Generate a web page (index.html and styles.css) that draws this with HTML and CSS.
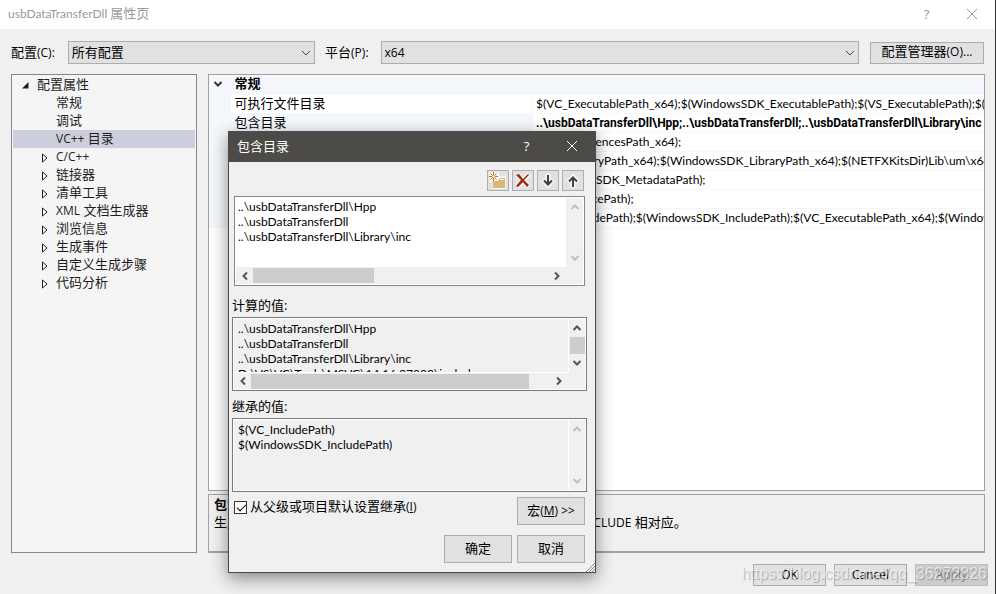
FILE: index.html
```html
<!DOCTYPE html>
<html lang="zh-CN">
<head>
    <meta charset="UTF-8">
    <meta name="viewport" content="width=device-width, initial-scale=1.0">
    <title>usbDataTransferDll 属性页</title>
    <link rel="stylesheet" href="styles.css">
</head>
<body>
    <!-- icons -->
    <svg class="defs">
        <symbol id="down" viewBox="0 0 10 6"><path d="M1 1l4 4 4-4" fill="none" stroke="currentColor"/></symbol>
        <symbol id="close" viewBox="0 0 12 12"><path d="M1 1l10 10M11 1L1 11" fill="none" stroke="currentColor"/></symbol>
        <symbol id="sb-up" viewBox="0 0 10 8"><path d="M1.5 6L5 2.500 8.500 6" fill="none" stroke="currentColor" stroke-width="2"/></symbol>
        <symbol id="sb-down" viewBox="0 0 10 8"><path d="M1.500 2L5 5.500 8.500 2" fill="none" stroke="currentColor" stroke-width="2"/></symbol>
        <symbol id="sb-left" viewBox="0 0 8 10"><path d="M6 1.500L2.500 5 6 8.500" fill="none" stroke="currentColor" stroke-width="2"/></symbol>
        <symbol id="sb-right" viewBox="0 0 8 10"><path d="M2 1.500L5.500 5 2 8.500" fill="none" stroke="currentColor" stroke-width="2"/></symbol>
        <symbol id="closed" viewBox="0 0 6 10"><path d="M.5 1v8l4.500-4z" fill="#fff" stroke="#1e1e1e"/></symbol>
        <symbol id="opened" viewBox="0 0 7 7"><path d="M6.500 0v6.500H0z" fill="#1e1e1e"/></symbol>
    </svg>

    <div class="window">
        <header class="titlebar">
            <h1>usbDataTransferDll <span class="zh">属性页</span></h1>
            <button class="caption" aria-label="帮助">?</button>
            <button class="caption" aria-label="关闭"><svg width="12" height="12"><use href="#close"/></svg></button>
        </header>

        <div class="config">
            <label for="config">配置<span class="en">(C):</span></label>
            <div class="combo combo-config">
                <select id="config" class="zh"><option>所有配置</option></select>
                <svg width="10" height="6"><use href="#down"/></svg>
            </div>
            <label for="platform">平台<span class="en">(P):</span></label>
            <div class="combo combo-platform">
                <select id="platform"><option>x64</option></select>
                <svg width="10" height="6"><use href="#down"/></svg>
            </div>
            <button class="btn manager">配置管理器<span class="en">(O)...</span></button>
        </div>

        <main class="content">
            <ul class="tree">
                <li class="root"><svg width="7" height="7"><use href="#opened"/></svg>配置属性</li>
                <li>常规</li>
                <li>调试</li>
                <li class="selected"><span class="en">VC++</span> 目录</li>
                <li><svg width="6" height="10"><use href="#closed"/></svg><span class="en">C/C++</span></li>
                <li><svg width="6" height="10"><use href="#closed"/></svg>链接器</li>
                <li><svg width="6" height="10"><use href="#closed"/></svg>清单工具</li>
                <li><svg width="6" height="10"><use href="#closed"/></svg><span class="en">XML</span> 文档生成器</li>
                <li><svg width="6" height="10"><use href="#closed"/></svg>浏览信息</li>
                <li><svg width="6" height="10"><use href="#closed"/></svg>生成事件</li>
                <li><svg width="6" height="10"><use href="#closed"/></svg>自定义生成步骤</li>
                <li><svg width="6" height="10"><use href="#closed"/></svg>代码分析</li>
            </ul>

            <div class="right">
                <div class="props">
                    <table>
                        <colgroup><col class="col-gutter"><col class="col-name"><col></colgroup>
                        <tr class="group"><td><svg width="10" height="8"><use href="#sb-down"/></svg></td><th colspan="2">常规</th></tr>
                        <tr><td></td><th>可执行文件目录</th><td>$(VC_ExecutablePath_x64);$(WindowsSDK_ExecutablePath);$(VS_ExecutablePath);$(MSBuild_ExecutablePath)</td></tr>
                        <tr class="current"><td></td><th>包含目录</th><td>..\usbDataTransferDll\Hpp;..\usbDataTransferDll;..\usbDataTransferDll\Library\inc</td></tr>
                        <tr><td></td><th>引用目录</th><td>$(VC_ReferencesPath_x64);</td></tr>
                        <tr><td></td><th>库目录</th><td>$(VC_LibraryPath_x64);$(WindowsSDK_LibraryPath_x64);$(NETFXKitsDir)Lib\um\x64</td></tr>
                        <tr><td></td><th>库 WinRT 目录</th><td>$(WindowsSDK_MetadataPath);</td></tr>
                        <tr><td></td><th>源目录</th><td>$(VC_SourcePath);</td></tr>
                        <tr><td></td><th>排除目录</th><td>$(VC_IncludePath);$(WindowsSDK_IncludePath);$(VC_ExecutablePath_x64);$(WindowsSDK_ExecutablePath)</td></tr>
                    </table>
                </div>
                <div class="description">
                    <strong>包含目录</strong>
                    <p>生成 <span class="en">VC++</span> 项目期间，搜索包含文件时使用的路径。 与环境变量 <span class="en">INCLUDE</span> 相对应。</p>
                </div>
            </div>
        </main>

        <footer class="actions">
            <button class="btn">OK</button>
            <button class="btn">Cancel</button>
            <button class="btn" disabled>Apply</button>
            <span class="watermark">https://blog.csdn.net/qq_36272826</span>
        </footer>
    </div>

    <section class="dialog" role="dialog" aria-labelledby="dialog-title">
        <header class="dialog-title">
            <h2 id="dialog-title">包含目录</h2>
            <button class="caption" aria-label="帮助">?</button>
            <button class="caption" aria-label="关闭"><svg width="12" height="12"><use href="#close"/></svg></button>
        </header>
        <div class="dialog-body">
            <div class="tools">
                <button class="btn" aria-label="新行">
                    <svg width="18" height="18" viewBox="0 0 18 18">
                        <path d="M0 0h10v4h7v13H4v-7H0z" fill="#f5f5f5"/>
                        <path d="M4 9h5l2-3h5v10H4z" fill="#dcb67a"/>
                        <path d="M11 7.500h4" stroke="#f5f5f5"/>
                        <path d="M4.500 0v9M0 4.500h9M1.500 1.500l6 6M7.500 1.500l-6 6" stroke="#c27d1a"/>
                        <circle cx="4.500" cy="4.500" r="1.200" fill="#f5f5f5"/>
                    </svg>
                </button>
                <button class="btn" aria-label="删除">
                    <svg width="18" height="18" viewBox="0 0 18 18">
                        <path d="M3 3l12 12M15 2L3 15" stroke="#f5f5f5" stroke-width="5"/>
                        <path d="M2 3l3-1 4 5 5-5 1 1-5 5 5 5-2 2-4-5-5 5-2-1 5-6z" fill="#a1260d"/>
                    </svg>
                </button>
                <button class="btn" aria-label="下移">
                    <svg width="18" height="18" viewBox="0 0 18 18">
                        <path d="M9 2v12M4 8l5 5 5-5" fill="none" stroke="#f5f5f5" stroke-width="5"/>
                        <path d="M9 3v10M5 8.500l4 4 4-4" fill="none" stroke="#424242" stroke-width="2"/>
                    </svg>
                </button>
                <button class="btn" aria-label="上移">
                    <svg width="18" height="18" viewBox="0 0 18 18">
                        <path d="M9 4v12M4 10l5-5 5 5" fill="none" stroke="#f5f5f5" stroke-width="5"/>
                        <path d="M9 5v10M5 9.500l4-4 4 4" fill="none" stroke="#424242" stroke-width="2"/>
                    </svg>
                </button>
            </div>

            <div class="listbox edit">
                <textarea aria-label="目录" wrap="off">..\usbDataTransferDll\Hpp
..\usbDataTransferDll
..\usbDataTransferDll\Library\inc</textarea>
                <div class="vbar off"><svg width="10" height="8"><use href="#sb-up"/></svg><svg width="10" height="8"><use href="#sb-down"/></svg></div>
                <div class="hbar"><svg width="8" height="10"><use href="#sb-left"/></svg><div class="track"><div class="thumb thumb-short"></div></div><svg width="8" height="10"><use href="#sb-right"/></svg></div>
            </div>

            <label class="caption-label" for="evaluated">计算的值:</label>
            <div class="listbox">
                <textarea id="evaluated" wrap="off" readonly>..\usbDataTransferDll\Hpp
..\usbDataTransferDll
..\usbDataTransferDll\Library\inc
D:\VS\VC\Tools\MSVC\14.16.27023\include</textarea>
                <div class="vbar"><svg width="10" height="8"><use href="#sb-up"/></svg><div class="vthumb"></div><svg width="10" height="8"><use href="#sb-down"/></svg></div>
                <div class="hbar"><svg width="8" height="10"><use href="#sb-left"/></svg><div class="track"><div class="thumb thumb-long"></div></div><svg width="8" height="10"><use href="#sb-right"/></svg></div>
            </div>

            <label class="caption-label" for="inherited">继承的值:</label>
            <div class="listbox plain">
                <textarea id="inherited" wrap="off" readonly>$(VC_IncludePath)
$(WindowsSDK_IncludePath)</textarea>
                <div class="vbar off"><svg width="10" height="8"><use href="#sb-up"/></svg><svg width="10" height="8"><use href="#sb-down"/></svg></div>
            </div>

            <div class="inherit">
                <input type="checkbox" id="inherit" checked>
                <label for="inherit">从父级或项目默认设置继承<span class="en">(<u>I</u>)</span></label>
                <button class="btn">宏<span class="en">(<u>M</u>) &gt;&gt;</span></button>
            </div>
            <div class="dialog-actions">
                <button class="btn">确定</button>
                <button class="btn">取消</button>
            </div>
        </div>
        <svg class="grip" width="10" height="10" viewBox="0 0 10 10"><path d="M1 10l9-9M4 10l6-6M7 10l3-3" stroke="#8a8a8a"/></svg>
    </section>
</body>
</html>
```

FILE: styles.css
```css
* {
    box-sizing: border-box;
}
body {
    margin: 0;
    font-family: "Open Sans", "Noto Sans CJK SC", sans-serif;
    font-size: 13px;
    line-height: 18px;
    color: #000;
    background-color: #f0f0f0;
}
h1, h2, p, ul {
    margin: 0;
    padding: 0;
    font-size: 13px;
    font-weight: normal;
}
button, select, textarea, input {
    font: inherit;
    color: inherit;
    margin: 0;
}
svg {
    display: block;
    flex: none;
}
.defs {
    position: absolute;
    width: 0;
    height: 0;
}
.en {
    font-size: 12px;
}
.zh {
    font-size: 13px;
}
.btn {
    background-color: #e1e1e1;
    border: 1px solid #adadad;
    padding: 0 0 2px;
}
.btn:disabled {
    background-color: #ccc;
    border-color: #bfbfbf;
    color: #838383;
}

/* main window */
.window {
    display: flex;
    flex-direction: column;
    min-height: 100vh;
    border-right: 1px solid #333;
}
.titlebar {
    display: flex;
    align-items: center;
    height: 29px;
    padding: 0 6px 2px 8px;
    background-color: #fff;
    color: #999;
}
.titlebar h1 {
    flex: 1;
    font-family: Lato, "Noto Sans CJK SC", sans-serif;
    font-size: 12px;
}
.caption {
    display: flex;
    align-items: center;
    justify-content: center;
    width: 45px;
    height: 27px;
    padding: 0;
    border: none;
    background: none;
}
.titlebar .caption:last-child {
    width: 24px;
    margin: 0 5px 0 11px;
}
.config {
    display: flex;
    align-items: center;
    padding: 12px 11px 10px;
}
.config label {
    flex: none;
}
.combo {
    position: relative;
    height: 23px;
}
.combo-config {
    flex: 247;
    margin: 0 10px 0 13px;
}
.combo-platform {
    flex: 478;
    margin: 0 11px 0 12px;
}
.combo select {
    appearance: none;
    width: 100%;
    height: 23px;
    padding: 0 3px 2px;
    border: 1px solid #adadad;
    border-radius: 0;
    background-color: #e1e1e1;
}
.combo select:not(.zh) {
    padding-bottom: 0;
    font-size: 12px;
}
.combo svg {
    position: absolute;
    right: 4px;
    top: 9px;
    color: #444;
}
.manager {
    width: 114px;
    height: 22px;
    line-height: 16px;
}
.content {
    display: flex;
    flex: 1;
    gap: 11px;
    padding: 0 10px 0 11px;
}
.tree {
    flex: none;
    width: 186px;
    padding: 1px;
    border: 1px solid #828790;
    background-color: #f5f5f5;
    color: #1e1e1e;
    line-height: 16px;
    list-style: none;
}
.tree li {
    position: relative;
    padding-left: 43px;
    height: 18px;
}
.tree li.root {
    padding-left: 24px;
}
.tree li svg {
    position: absolute;
    left: 29px;
    top: 5px;
}
.tree li.root svg {
    left: 9px;
    top: 6px;
}
.tree li.selected {
    background-color: #cccedb;
}
.right {
    display: flex;
    flex: 1;
    flex-direction: column;
    gap: 3px;
    min-width: 0;
}
.props {
    flex: 1;
    border: 1px solid #a0a0a0;
    background-color: #fff;
}
.props table {
    width: 100%;
    table-layout: fixed;
    border-collapse: collapse;
}
.col-gutter {
    width: 21px;
}
.col-name {
    width: 302px;
}
.props tr {
    height: 19px;
}
.props td, .props th {
    padding: 0 0 0 3px;
    overflow: hidden;
    white-space: nowrap;
    text-align: left;
    font-weight: normal;
    border-bottom: 1px solid #f4f7fc;
}
.props th {
    padding: 0 0 2px 4px;
    line-height: 16px;
}
.props td {
    font-family: Lato, sans-serif;
    font-size: 12px;
    border-left: 1px solid #f4f7fc;
}
.props td:first-child, .props .group, .props .current th {
    background-color: #f4f7fc;
}
.props td svg {
    color: #333;
}
.props .group th {
    font-weight: bold;
}
.props .current td {
    font-family: Roboto, sans-serif;
    font-weight: bold;
}
.description {
    height: 59px;
    padding: 0 5px;
    border: 1px solid #a0a0a0;
    border-bottom-width: 2px;
}
.description strong {
    display: block;
}
.actions {
    position: relative;
    display: flex;
    justify-content: flex-end;
    gap: 8px;
    padding: 11px 7px 8px;
    font-size: 12px;
}
.actions .btn {
    width: 73px;
    height: 22px;
    padding: 0;
    line-height: 16px;
}
.watermark {
    position: absolute;
    right: 8px;
    top: 12px;
    font-family: "Liberation Sans", sans-serif;
    font-size: 16px;
    color: rgba(255, 255, 255, 0.6);
    text-shadow: 1px 1px 1px rgba(0, 0, 0, 0.25);
    pointer-events: none;
}

/* include directories dialog */
.dialog {
    position: absolute;
    left: 228px;
    top: 131px;
    width: 368px;
    border: 1px solid #4d4b48;
    background-color: #f0f0f0;
    box-shadow: 0 5px 16px rgba(0, 0, 0, 0.45);
}
.dialog-title {
    display: flex;
    align-items: center;
    height: 30px;
    padding: 0 1px 2px 8px;
    background-color: #4d4b48;
    color: #fff;
}
.dialog-title h2 {
    flex: 1;
}
.dialog-body {
    padding: 8px 8px 9px 3px;
}
.tools {
    display: flex;
    justify-content: flex-end;
    gap: 3px;
    margin: 0 3px 5px;
}
.tools .btn {
    display: flex;
    align-items: center;
    justify-content: center;
    width: 22px;
    height: 21px;
    padding: 0;
}
.listbox {
    display: grid;
    grid-template-columns: 1fr 17px;
    grid-template-rows: 1fr 17px;
    height: 74px;
    padding: 1px;
    border: 1px solid #7a7a7a;
    outline: 1px solid #fff;
    outline-offset: -2px;
}
.listbox.edit {
    height: 90px;
    margin: 0 2px;
    border-color: #828790;
    background-color: #fff;
}
.listbox.plain {
    grid-template-rows: 1fr;
}
.listbox textarea {
    display: block;
    width: 100%;
    height: 100%;
    padding: 2px 4px 0;
    border: none;
    resize: none;
    overflow: hidden;
    background: none;
    font-family: Lato, sans-serif;
    font-size: 12px;
    line-height: 15px;
}
.listbox.edit textarea {
    padding: 1px 2px 0;
}
.vbar, .hbar {
    display: flex;
    align-items: center;
    justify-content: space-between;
    background-color: #f0f0f0;
    color: #555;
}
.vbar {
    flex-direction: column;
    padding: 5px 0;
}
.vbar.off {
    color: #bfbfbf;
}
.listbox:not(.edit) .vbar {
    border-left: 1px solid #fff;
}
.listbox:not(.edit) .hbar {
    border-top: 1px solid #fff;
}
.vthumb {
    width: 15px;
    height: 17px;
    background-color: #cdcdcd;
}
.hbar {
    padding: 0 5px;
}
.edit .hbar {
    grid-column: 1 / 3;
    padding-right: 22px;
}
.track {
    flex: 1;
    height: 15px;
    margin: 0 5px 0 4px;
}
.thumb {
    height: 15px;
    background-color: #cdcdcd;
}
.thumb-short {
    width: 41%;
}
.thumb-long {
    width: 93%;
}
.caption-label {
    display: block;
    padding: 10px 0 3px;
}
.listbox:not(.edit) + .caption-label {
    padding: 6px 0 3px;
}
.inherit {
    display: flex;
    align-items: flex-start;
    padding: 5px 2px 0;
}
.inherit input {
    appearance: none;
    width: 13px;
    height: 13px;
    margin: 4px 3px 0 0;
    border: 1px solid #333;
    background-color: #fff;
}
.inherit input:checked::after {
    content: "";
    display: block;
    width: 8px;
    height: 4px;
    margin: 2px 0 0 2px;
    border-left: 1px solid #000;
    border-bottom: 1px solid #000;
    transform: rotate(-45deg);
}
.inherit label {
    flex: 1;
}
.inherit .btn, .dialog-actions .btn {
    width: 68px;
    height: 28px;
}
.dialog-actions {
    display: flex;
    justify-content: flex-end;
    gap: 5px;
    padding: 10px 2px 0;
}
.grip {
    position: absolute;
    right: 0;
    bottom: 0;
}
```
